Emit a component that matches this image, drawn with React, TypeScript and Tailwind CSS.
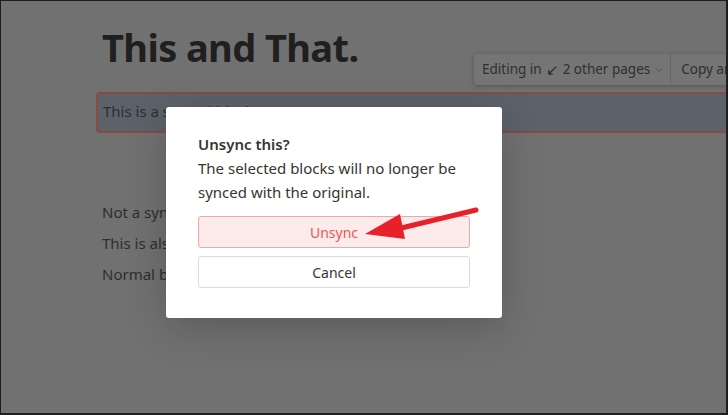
export default function App() {
  return (
    <div
      className="relative h-[415px] w-[728px] overflow-hidden border border-r-2 border-b-2 border-[#1e1e1e] bg-[#717171]"
      style={{ fontFamily: '"Noto Sans", "Open Sans", sans-serif' }}
    >
      {/* page behind the overlay */}
      <div className="pl-[101px] pt-[23px]">
        <h1 className="text-[38px] font-bold leading-[46px] tracking-[-0.6px] text-[#1f1f1f]">
          This and That.
        </h1>
        <div className="relative mt-[22px] -ml-[6px] h-[41px] w-[700px] rounded-[4px] border-2 border-[#8a4a40] bg-[#5c6269] pl-[5px] pt-[6px] text-[15px] text-[#2e2e2e]">
          This is a synced block
          <div className="absolute -top-[40px] left-[376px] flex h-[31px] items-center whitespace-nowrap rounded-[4px] bg-[#757575] text-[13.5px] text-[#2f2f2f] shadow-[0_1px_4px_rgba(0,0,0,0.25)]">
            <div className="flex h-full items-center gap-1 border-r border-[#666] pl-2 pr-1.5">
              Editing in <span className="text-[15px] leading-none">↙</span> 2 other pages
              <svg width="10" height="10" viewBox="0 0 10 10">
                <path d="M2 3.5 5 6.5 8 3.5" fill="none" stroke="#555" strokeWidth="1" />
              </svg>
            </div>
            <div className="px-2.5">Copy and sync</div>
          </div>
        </div>
        <div className="mt-[68px] flex flex-col gap-[9px] text-[15px] leading-[22px] text-[#2e2e2e]">
          <p>Not a synced block</p>
          <p>This is also not synced</p>
          <p>Normal block</p>
        </div>
      </div>

      {/* dialog */}
      <div className="absolute left-[165px] top-[106px] w-[336px] rounded-[3px] bg-white px-[32px] pb-[30px] pt-[25px] shadow-[0_10px_40px_rgba(0,0,0,0.2)]">
        <p className="text-[15px] font-semibold leading-[24px] text-[#37352f]">Unsync this?</p>
        <p className="text-[15px] leading-[24px] text-[#37352f]">
          The selected blocks will no longer be synced with the original.
        </p>
        <button className="mt-[12px] flex h-[32px] w-full items-center justify-center rounded-[3px] border border-[#f3a7a7] bg-[#fdebec] text-[14px] text-[#eb5757]">
          Unsync
        </button>
        <button className="mt-[8px] flex h-[32px] w-full items-center justify-center rounded-[3px] border border-[#dcdcdc] bg-white text-[14px] text-[#37352f]">
          Cancel
        </button>
      </div>

      {/* annotation arrow */}
      <svg className="absolute left-0 top-0" width="728" height="415" viewBox="0 0 728 415">
        <line x1="475" y1="209" x2="392" y2="229" stroke="#e8202a" strokeWidth="5" strokeLinecap="round" />
        <polygon points="364,233 399,213 404,238" fill="#e8202a" />
      </svg>
    </div>
  );
}
